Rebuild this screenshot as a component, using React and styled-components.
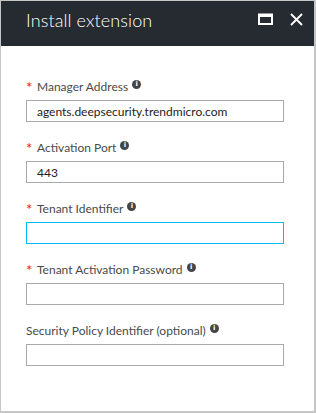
import React from 'react'
import styled, { createGlobalStyle } from 'styled-components'

const Global = createGlobalStyle`
    html, body {
        margin:0;
        padding:0;
        background:#fff;
    }
    body {
        font-family:Lato, "Open Sans", Arial, sans-serif;
    }
`

const Panel = styled.div`
    width:316px;
    height:413px;
    box-sizing:border-box;
    border:1px solid #c6c6c6;
    border-right-width:2px;
    border-bottom-width:2px;
    display:flex;
    flex-direction:column;
    background:#fff;
`

const Header = styled.div`
    height:45px;
    background:#262b31;
    display:flex;
    align-items:flex-start;
    justify-content:space-between;
    padding:0 10px 0 25px;
    box-sizing:border-box;
`

const Title = styled.h1`
    margin:0;
    padding-top:7px;
    font-size:18px;
    line-height:24px;
    font-weight:300;
    color:#fff;
    letter-spacing:0.1px;
`

const Controls = styled.div`
    display:flex;
    align-items:center;
    gap:16px;
    padding-top:11px;
`

const IconButton = styled.span`
    display:flex;
    width:15px;
    height:14px;
    align-items:center;
    justify-content:center;
`

const Form = styled.div`
    display:flex;
    flex-direction:column;
    gap:16px;
    padding:31px 0 0 25px;
`

const Field = styled.div`
    display:flex;
    flex-direction:column;
    gap:5px;
`

const Label = styled.label`
    display:flex;
    align-items:center;
    height:18px;
    font-size:12px;
    color:#4a4a4a;
    white-space:nowrap;
`

const Star = styled.span`
    color:#e81123;
    font-weight:400;
    font-size:15px;
    width:11px;
    margin-top:2px;
`

const Info = styled.span`
    display:inline-flex;
    align-items:center;
    justify-content:center;
    width:9px;
    height:9px;
    border-radius:50%;
    background:#454545;
    color:#fff;
    font-size:7px;
    font-weight:700;
    line-height:1;
    margin-left:4px;
    margin-top:-3px;
    font-family:"DejaVu Sans", sans-serif;
`

const Input = styled.div`
    width:258px;
    height:22px;
    box-sizing:border-box;
    border:1px solid ${p => (p.$focused ? '#00bcf2' : '#a9a9a9')};
    padding:0 10px;
    display:flex;
    align-items:center;
    font-size:12px;
    color:#222;
`

const fields = [
    { label: 'Manager Address', required: true, value: 'agents.deepsecurity.trendmicro.com' },
    { label: 'Activation Port', required: true, value: '443' },
    { label: 'Tenant Identifier', required: true, value: '', focused: true },
    { label: 'Tenant Activation Password', required: true, value: '' },
    { label: 'Security Policy Identifier (optional)', required: false, value: '' },
]

const App = () => {
    return (
        <>
            <Global />
            <Panel>
                <Header>
                    <Title>Install extension</Title>
                    <Controls>
                        <IconButton>
                            <svg width="15" height="12" viewBox="0 0 15 12">
                                <rect x="1" y="1.5" width="13" height="9.5" fill="none" stroke="#fff" strokeWidth="2" />
                                <rect x="1" y="1" width="13" height="3" fill="#fff" />
                            </svg>
                        </IconButton>
                        <IconButton>
                            <svg width="13" height="13" viewBox="0 0 13 13">
                                <path d="M1 1 L12 12 M12 1 L1 12" stroke="#fff" strokeWidth="1.8" />
                            </svg>
                        </IconButton>
                    </Controls>
                </Header>
                <Form>
                    {fields.map(f => (
                        <Field key={f.label}>
                            <Label>
                                {f.required && <Star>*</Star>}
                                {f.label}
                                <Info>i</Info>
                            </Label>
                            <Input $focused={f.focused}>{f.value}</Input>
                        </Field>
                    ))}
                </Form>
            </Panel>
        </>
    )
}

export default App
